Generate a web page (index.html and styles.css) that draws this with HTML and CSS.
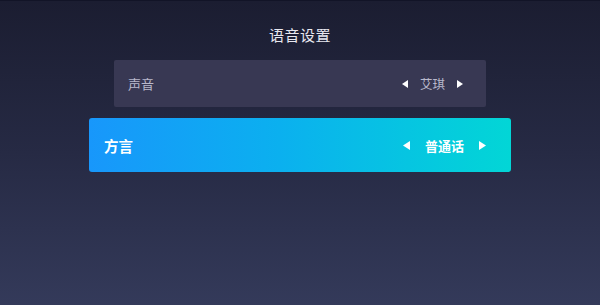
FILE: index.html
```html
<!DOCTYPE html>
<html lang="zh">
<head>
<meta charset="utf-8">
<link rel="stylesheet" href="styles.css">
</head>
<body>
<div class="screen">
  <h1 class="title">语音设置</h1>
  <div class="list">
    <div class="row">
      <span class="label">声音</span>
      <div class="picker">
        <svg class="arrow" width="6" height="8" viewBox="0 0 6 8"><polygon points="6,0 6,8 0,4" fill="#ffffff"/></svg>
        <span class="value">艾琪</span>
        <svg class="arrow" width="6" height="8" viewBox="0 0 6 8"><polygon points="0,0 0,8 6,4" fill="#ffffff"/></svg>
      </div>
    </div>
    <div class="row focused">
      <span class="label">方言</span>
      <div class="picker">
        <svg class="arrow" width="7" height="9" viewBox="0 0 7 9"><polygon points="7,0 7,9 0,4.5" fill="#ffffff"/></svg>
        <span class="value">普通话</span>
        <svg class="arrow" width="7" height="9" viewBox="0 0 7 9"><polygon points="0,0 0,9 7,4.5" fill="#ffffff"/></svg>
      </div>
    </div>
  </div>
</div>
</body>
</html>
```
FILE: styles.css
```css
html, body {
  margin: 0;
  padding: 0;
}
body {
  width: 600px;
  height: 305px;
  overflow: hidden;
  font-family: "Noto Sans CJK SC", "Noto Sans", sans-serif;
}
.screen {
  width: 600px;
  height: 305px;
  box-sizing: border-box;
  border-top: 1px solid #121427;
  background: linear-gradient(180deg, #1b1d31 0%, #262a44 50%, #343a5a 100%);
  display: flex;
  flex-direction: column;
  align-items: center;
}
.title {
  margin: 23px 0 0;
  height: 22px;
  line-height: 22px;
  font-size: 15px;
  font-weight: normal;
  color: #e8e8f0;
  letter-spacing: 0.5px;
}
.list {
  margin-top: 14px;
  display: flex;
  flex-direction: column;
  align-items: center;
  gap: 11px;
}
.row {
  width: 372px;
  height: 47px;
  box-sizing: border-box;
  padding: 0 23px 0 14px;
  background: #383853;
  border-radius: 2px;
  display: flex;
  align-items: center;
  justify-content: space-between;
}
.label {
  font-size: 13px;
  color: #b9b9cc;
}
.picker {
  display: flex;
  align-items: center;
  gap: 12px;
}
.value {
  font-size: 12.5px;
  color: #b9b9cc;
}
.row.focused {
  width: 422px;
  height: 54px;
  padding: 0 25px 0 15px;
  border-radius: 3px;
  background: linear-gradient(90deg, #1897fb 0%, #0bb0ef 45%, #02d6d6 100%);
}
.row.focused .label {
  font-size: 14.5px;
  font-weight: bold;
  color: #ffffff;
}
.row.focused .picker {
  gap: 15px;
}
.row.focused .value {
  font-size: 13px;
  font-weight: bold;
  color: #ffffff;
}
```
